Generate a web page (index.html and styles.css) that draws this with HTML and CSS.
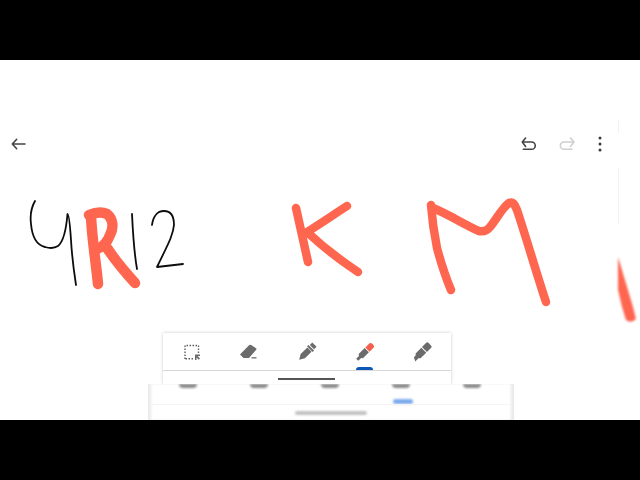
FILE: index.html
```html
<!DOCTYPE html>
<html lang="en">
<head>
<meta charset="utf-8">
<title>Handwriting canvas</title>
<link rel="stylesheet" href="styles.css">
</head>
<body>
<div class="bar"></div>
<main class="stage">
  <svg class="canvas" viewBox="0 60 640 360" aria-hidden="true">
    <path class="edge" d="M618.5 120V133M618.5 168V224"/>
    <g class="ink-thin">
      <path d="M35 201C31 208 30 216 31 224C32 235 36 245 45 247C50 248.500 55 248 58 246C63 242 66 232 67.500 214C69 214 70 225 71 240C72 258 74 272 76 285"/>
      <path d="M132 214C133 235 134 252 137 269"/>
      <path d="M152 225C153 217 157 211 164 211C171 211 174 217 174 225C173 236 167 246 157 267C165 266 175 265 183 264"/>
    </g>
    <g class="ink-r">
      <path d="M91 216C92 240 96 262 98 284"/>
      <path d="M89 215C96 212 103 212 107 214C113 219 114 227 110 235C107 243 103 247 97 249"/>
      <path d="M107 248C115 260 125 272 135 283"/>
    </g>
    <g class="ink-bold">
      <path d="M296 208C300 226 304 244 308 262"/>
      <path d="M347 206C333 215 320 224 307 232C323 247 340 260 358 272"/>
      <path d="M451 290C446 278 441 263 437 248C434 233 432 218 431 205"/>
      <path d="M433 208C450 215 465 225 479 231C484 232 487 231 490 227C496 220 502 208 509 203C514 201 515 206 517 210C527 240 536 272 546 302"/>
    </g>
    <path class="ink-ghost" d="M618 257L628 290L633 307L636 319Q631 324 626 320L622 307L618 290Z"/>
  </svg>

  <header class="topbar">
    <svg class="icon" viewBox="0 0 24 24" role="img" aria-label="Back">
      <path class="line" d="M19 12H6.300M10.700 7.300L6.300 12L10.700 16.700"/>
    </svg>
    <div class="actions">
      <svg class="icon" viewBox="0 0 24 24" role="img" aria-label="Undo">
        <path class="line" d="M9.600 6L6.300 10L9.600 14.500M6.300 10H15.600A3.650 3.650 0 0 1 15.600 17.300H7.300"/>
      </svg>
      <svg class="icon" viewBox="0 0 24 24" role="img" aria-label="Redo">
        <path class="line line-off" d="M18.500 6L22 10L18.500 14.500M22 10H12A3.650 3.650 0 0 0 12 17.300H20"/>
      </svg>
      <svg class="icon" viewBox="0 0 24 24" role="img" aria-label="More">
        <circle class="dot" cx="12" cy="6" r="1.500"/>
        <circle class="dot" cx="12" cy="12" r="1.500"/>
        <circle class="dot" cx="12" cy="18" r="1.500"/>
      </svg>
    </div>
  </header>

  <section class="tools">
    <div class="tool-row">
      <div class="tool">
        <svg class="icon" viewBox="0 0 24 24" role="img" aria-label="Select">
          <path class="dashed" d="M5 19V5.500H18.500V14M13 18.700H5"/>
          <path class="fill" d="M15 14.500H20V16H17.600L20 18.500L18.800 19.700L16.500 17.400V20H15Z"/>
        </svg>
      </div>
      <div class="tool">
        <svg class="icon" viewBox="0 0 24 24" role="img" aria-label="Eraser">
          <path class="fill" d="M3 14.500L12 5.200Q13 4.300 14.200 5L19 8.200Q20 9 19 10L12 18H6.500Z"/>
          <path class="fill" d="M14.500 17.200H19.500V18.500H14.500Z"/>
        </svg>
      </div>
      <div class="tool">
        <svg class="icon" viewBox="0 0 24 24" role="img" aria-label="Pen">
          <g transform="rotate(45 12 12)">
            <path class="fill" d="M9 1.500H15V5H9ZM8 6H16V8H8ZM9 8.500H15V18L12 23L9 18Z"/>
          </g>
        </svg>
      </div>
      <div class="tool tool-active">
        <svg class="icon" viewBox="0 0 24 24" role="img" aria-label="Marker">
          <g transform="rotate(45 12 12)">
            <path class="tip" d="M9 3Q9 1 12 1Q15 1 15 3V8.500H9Z"/>
            <path class="fill" d="M9 9.500H15V18L13.500 19V23H10.500V19L9 18Z"/>
          </g>
        </svg>
      </div>
      <div class="tool">
        <svg class="icon" viewBox="0 0 24 24" role="img" aria-label="Highlighter">
          <g transform="rotate(45 12 12)">
            <path class="fill" d="M8.500 2.500Q8.500 1 10 1H14Q15.500 1 15.500 2.500V8.500H8.500ZM8.500 9.500H15.500V17.500L14 19V23.500L10 21.500V19L8.500 17.500Z"/>
          </g>
        </svg>
      </div>
    </div>
    <div class="handle"></div>
  </section>

  <section class="ghost">
    <div class="ghost-row">
      <span class="blob"></span>
      <span class="blob"></span>
      <span class="blob"></span>
      <span class="blob"></span>
      <span class="blob"></span>
    </div>
    <div class="ghost-mark"></div>
    <div class="ghost-rule"></div>
    <div class="ghost-handle"></div>
  </section>
</main>
<div class="bar"></div>
</body>
</html>
```

FILE: styles.css
```css
* { box-sizing: border-box; }

html, body {
  margin: 0;
  width: 640px;
  height: 480px;
  overflow: hidden;
  background: #000;
  font-family: "Roboto", sans-serif;
}

body {
  display: flex;
  flex-direction: column;
}

.bar {
  flex: 0 0 60px;
  background: #000;
}

.stage {
  position: relative;
  flex: 0 0 360px;
  display: flex;
  flex-direction: column;
  background: #fff;
  overflow: hidden;
}

/* Free-hand drawing surface */
.canvas {
  position: absolute;
  inset: 0;
  width: 640px;
  height: 360px;
}

.canvas path { fill: none; stroke-linecap: round; stroke-linejoin: round; }

.edge { stroke: #f2f2f2; stroke-width: 1; }
.ink-thin { stroke: #0c0c0c; stroke-width: 1.800; filter: blur(.25px); }
.ink-r { stroke: #ff6650; stroke-width: 10.500; filter: blur(.3px); }
.ink-bold { stroke: #ff6650; stroke-width: 8.500; filter: blur(.3px); }
.canvas .ink-ghost { fill: #ff6650; stroke: none; filter: blur(1.200px); }

/* Top bar */
.topbar {
  position: relative;
  display: flex;
  justify-content: space-between;
  padding: 72px 28px 0 6px;
}

.actions {
  display: flex;
  gap: 12px;
}

.icon {
  display: block;
  width: 24px;
  height: 24px;
}

.line {
  fill: none;
  stroke: #444;
  stroke-width: 1.600;
  stroke-linecap: round;
  stroke-linejoin: round;
}

.line-off { stroke: #cfcfcf; }
.dot { fill: #3a3a3a; }

/* Tool tray */
.tools {
  position: relative;
  margin: auto 0 0 163px;
  width: 288px;
  height: 51px;
  background: #fff;
  box-shadow: 0 0 3px rgba(0, 0, 0, .22);
}

.tool-row {
  display: grid;
  grid-template-columns: repeat(5, 1fr);
  height: 38px;
  border-bottom: 1px solid #d8d8d8;
}

.tool {
  position: relative;
  display: flex;
  justify-content: center;
  padding-top: 7px;
}

.tool-active::after {
  content: "";
  position: absolute;
  left: 50%;
  bottom: 0;
  width: 17px;
  height: 3px;
  margin-left: -8.500px;
  border-radius: 3px 3px 0 0;
  background: #0b57b8;
}

.fill { fill: #6b6b6b; }
.tip { fill: #f0604c; }

.dashed {
  fill: none;
  stroke: #5f5f5f;
  stroke-width: 1.400;
  stroke-dasharray: 1.500 1.500;
}

.handle {
  width: 57px;
  height: 2px;
  margin: 7px 0 0 115px;
  background: #555;
}

/* Blurred tray behind */
.ghost {
  position: relative;
  flex: 0 0 36px;
  margin-left: 148px;
  width: 366px;
  background: #fff;
  box-shadow: inset 4px 0 3px -1px #e9e9e9, inset -4px 0 3px -1px #e9e9e9;
  overflow: hidden;
}

.ghost-row {
  display: grid;
  grid-template-columns: repeat(5, 71px);
  padding-left: 4px;
}

.blob {
  justify-self: center;
  width: 18px;
  height: 4px;
  border-radius: 0 0 8px 8px;
  background: #8a8a8a;
  filter: blur(1.300px);
}

.ghost-mark {
  width: 20px;
  height: 5px;
  margin: 11px 0 0 245px;
  border-radius: 3px;
  background: #7cabec;
  filter: blur(1px);
}

.ghost-rule {
  height: 1px;
  margin: 0 3px;
  background: #f4f4f4;
  filter: blur(.6px);
}

.ghost-handle {
  width: 72px;
  height: 4px;
  margin: 6px 0 0 147px;
  border-radius: 2px;
  background: #c2c2c2;
  filter: blur(.9px);
}
```
